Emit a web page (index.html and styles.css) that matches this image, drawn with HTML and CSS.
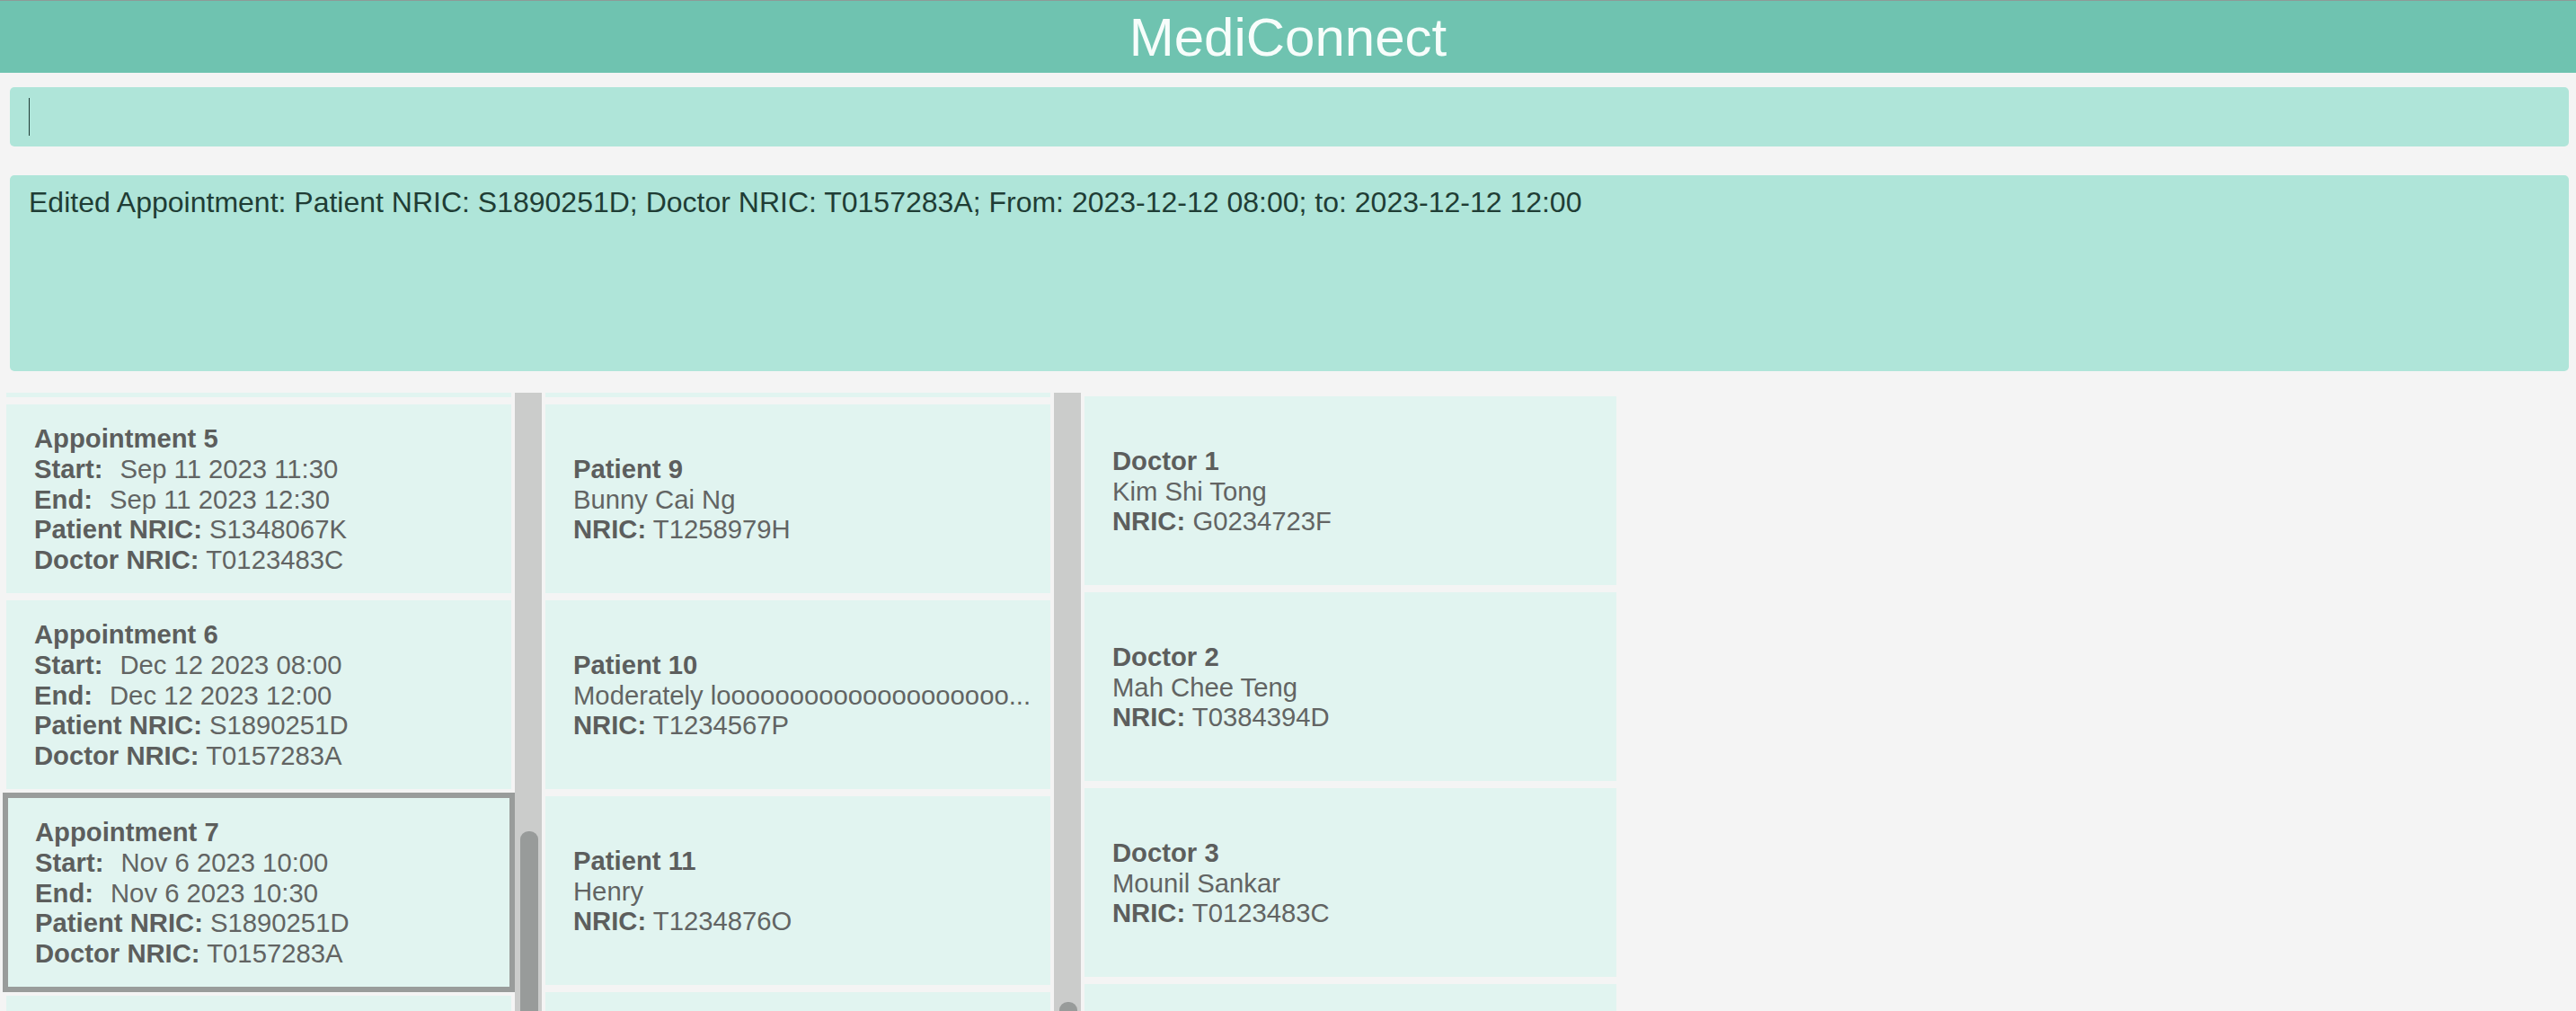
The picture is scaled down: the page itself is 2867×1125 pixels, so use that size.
FILE: index.html
```html
<!DOCTYPE html>
<html lang="en">
<head>
<meta charset="utf-8">
<title>MediConnect</title>
<link rel="stylesheet" href="styles.css">
</head>
<body>
<div class="app">
  <header class="header"><span class="title">MediConnect</span></header>
  <div class="command"><span class="caret"></span></div>
  <div class="result">Edited Appointment: Patient NRIC: S1890251D; Doctor NRIC: T0157283A; From: 2023-12-12 08:00; to: 2023-12-12 12:00</div>
  <div class="lists">
    <div class="col">
      <div class="list scrolled">
        <div class="card"></div>
        <div class="card">
          <div class="line"><b>Appointment 5</b></div>
          <div class="line"><b>Start:</b><span class="date">Sep 11 2023 11:30</span></div>
          <div class="line"><b>End:</b><span class="date">Sep 11 2023 12:30</span></div>
          <div class="line"><b>Patient NRIC:</b> S1348067K</div>
          <div class="line"><b>Doctor NRIC:</b> T0123483C</div>
        </div>
        <div class="card">
          <div class="line"><b>Appointment 6</b></div>
          <div class="line"><b>Start:</b><span class="date">Dec 12 2023 08:00</span></div>
          <div class="line"><b>End:</b><span class="date">Dec 12 2023 12:00</span></div>
          <div class="line"><b>Patient NRIC:</b> S1890251D</div>
          <div class="line"><b>Doctor NRIC:</b> T0157283A</div>
        </div>
        <div class="card selected">
          <div class="line"><b>Appointment 7</b></div>
          <div class="line"><b>Start:</b><span class="date">Nov 6 2023 10:00</span></div>
          <div class="line"><b>End:</b><span class="date">Nov 6 2023 10:30</span></div>
          <div class="line"><b>Patient NRIC:</b> S1890251D</div>
          <div class="line"><b>Doctor NRIC:</b> T0157283A</div>
        </div>
        <div class="card"></div>
      </div>
      <div class="scrollbar"><div class="thumb thumb-a"></div></div>
    </div>
    <div class="col">
      <div class="list scrolled">
        <div class="card"></div>
        <div class="card">
          <div class="line"><b>Patient 9</b></div>
          <div class="line">Bunny Cai Ng</div>
          <div class="line"><b>NRIC:</b> T1258979H</div>
        </div>
        <div class="card">
          <div class="line"><b>Patient 10</b></div>
          <div class="line">Moderately loooooooooooooooooooo...</div>
          <div class="line"><b>NRIC:</b> T1234567P</div>
        </div>
        <div class="card">
          <div class="line"><b>Patient 11</b></div>
          <div class="line">Henry</div>
          <div class="line"><b>NRIC:</b> T1234876O</div>
        </div>
        <div class="card"></div>
      </div>
      <div class="scrollbar"><div class="thumb thumb-b"></div></div>
    </div>
    <div class="col">
      <div class="list wide top">
        <div class="card">
          <div class="line"><b>Doctor 1</b></div>
          <div class="line">Kim Shi Tong</div>
          <div class="line"><b>NRIC:</b> G0234723F</div>
        </div>
        <div class="card">
          <div class="line"><b>Doctor 2</b></div>
          <div class="line">Mah Chee Teng</div>
          <div class="line"><b>NRIC:</b> T0384394D</div>
        </div>
        <div class="card">
          <div class="line"><b>Doctor 3</b></div>
          <div class="line">Mounil Sankar</div>
          <div class="line"><b>NRIC:</b> T0123483C</div>
        </div>
        <div class="card"></div>
      </div>
    </div>
  </div>
</div>
</body>
</html>
```
FILE: styles.css
```css
html, body {
  margin: 0;
  padding: 0;
}
body {
  background: #f4f4f4;
  font-family: "Liberation Sans", Arial, sans-serif;
  width: 2867px;
  height: 1125px;
  overflow: hidden;
}
.app {
  display: flex;
  flex-direction: column;
  height: 1125px;
}
.header {
  border-top: 1px solid #8e9a97;
  background: #6fc3b0;
  display: flex;
  justify-content: center;
  align-items: center;
  padding-top: 2px;
  box-sizing: border-box;
  height: 81px;
  flex-shrink: 0;
}
.title {
  color: #f7fdfb;
  font-size: 60px;
  line-height: 1;
}
.command {
  margin: 16px 8px 0 11px;
  height: 66px;
  background: #afe5d9;
  border-radius: 5px;
  display: flex;
  align-items: center;
  padding-left: 21px;
  flex-shrink: 0;
}
.caret {
  width: 1px;
  height: 42px;
  background: #1f3b35;
}
.result {
  margin: 32px 8px 0 11px;
  height: 218px;
  box-sizing: border-box;
  background: #afe5d9;
  border-radius: 5px;
  padding: 12px 0 0 21px;
  color: #1f3d35;
  font-size: 32px;
  line-height: 37px;
  flex-shrink: 0;
}
.lists {
  margin-top: 24px;
  flex: 1;
  display: flex;
  padding-left: 4px;
  overflow: hidden;
}
.col {
  width: 600px;
  display: flex;
  flex-shrink: 0;
}
.list {
  width: 562px;
  margin-left: 3px;
  display: flex;
  flex-direction: column;
  gap: 8px;
  flex-shrink: 0;
}
.list.wide {
  width: 592px;
}
.list.scrolled {
  margin-top: -205px;
}
.list.top {
  padding-top: 4px;
}
.card {
  height: 210px;
  flex-shrink: 0;
  box-sizing: border-box;
  background: #e1f4f0;
  display: flex;
  flex-direction: column;
  justify-content: center;
  padding: 3px 0 0 31px;
  color: #626463;
  font-size: 29.25px;
  line-height: 33.7px;
  white-space: nowrap;
}
.card b {
  color: #5c5e5d;
  font-weight: bold;
}
.card.selected {
  border: 6px solid #999c9b;
  margin: -4px -4px;
  height: 222px;
  padding-left: 30px;
}
.date {
  margin-left: 19px;
}
.scrollbar {
  width: 30px;
  margin-left: 4px;
  background: #cbcccb;
  flex-shrink: 0;
  display: flex;
  flex-direction: column;
}
.thumb {
  width: 20px;
  height: 420px;
  margin-left: 6px;
  background: #989b9a;
  border-radius: 9px 9px 0 0;
  flex-shrink: 0;
}
.thumb-a {
  margin-top: 488px;
}
.thumb-b {
  margin-top: 678px;
}
```
